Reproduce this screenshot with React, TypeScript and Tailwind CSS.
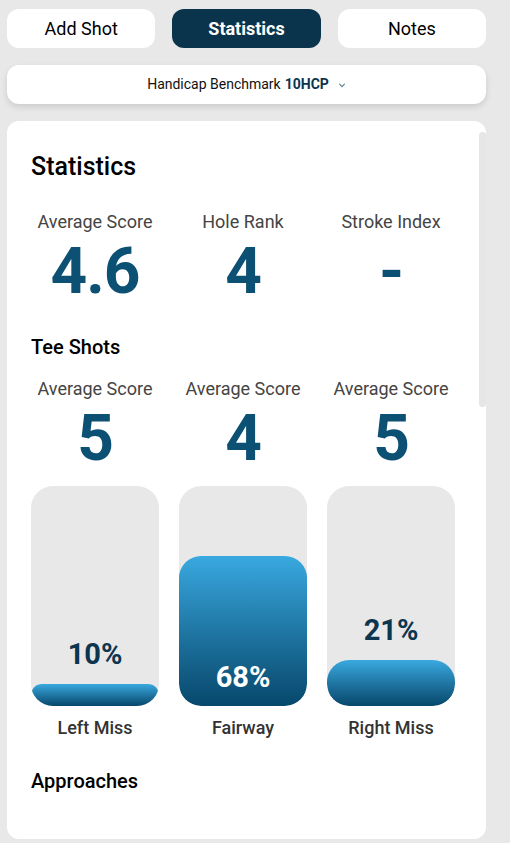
import React from 'react'

const tabs = ['Add Shot', 'Statistics', 'Notes']

interface Miss {
  label: string
  pct: number
  fill: number
}

const misses: Miss[] = [
  { label: 'Left Miss', pct: 10, fill: 22 },
  { label: 'Fairway', pct: 68, fill: 150 },
  { label: 'Right Miss', pct: 21, fill: 46 },
]

function StatCol({ label, value }: { label: string; value: string }) {
  return (
    <div className="flex flex-col items-center">
      <span className="text-[18px] leading-[22px] text-[#444444]">{label}</span>
      <span className="mt-[4px] text-[64px] leading-[70px] font-bold tracking-[-1px] text-[#0c5074]">{value}</span>
    </div>
  )
}

function MissBar({ miss }: { miss: Miss }) {
  const inside = miss.fill > 100
  return (
    <div className="flex flex-col items-center">
      <div className="relative h-[220px] w-full rounded-[22px] bg-[#e8e8e8] overflow-hidden flex flex-col justify-end">
        {!inside && (
          <span className="mb-[15px] text-center text-[29px] leading-[30px] font-bold text-[#0c3550]">
            {miss.pct}%
          </span>
        )}
        <div
          className="w-full rounded-[22px] bg-gradient-to-b from-[#39a9e0] to-[#07486c] flex items-end justify-center"
          style={{ height: miss.fill }}
        >
          {inside && (
            <span className="mb-[14px] text-[29px] leading-[30px] font-bold text-white">{miss.pct}%</span>
          )}
        </div>
      </div>
      <span className="mt-[11px] text-[18px] leading-[22px] font-medium text-[#333333]">{miss.label}</span>
    </div>
  )
}

export default function App() {
  return (
    <div className="min-h-[843px] w-[510px] bg-[#e8e8e8] px-[7px] pt-[9px] font-['Roboto',sans-serif]">
      <div className="w-[479px]">
        <div className="grid grid-cols-3 gap-[17px]">
          {tabs.map((t) => (
            <button
              key={t}
              className={
                t === 'Statistics'
                  ? 'h-[39px] rounded-[12px] bg-[#0a344c] text-[18px] font-bold text-white'
                  : 'h-[39px] rounded-[12px] bg-white text-[18px] text-black'
              }
            >
              {t}
            </button>
          ))}
        </div>

        <div className="mt-[17px] h-[39px] rounded-[12px] bg-white shadow-[0_3px_6px_rgba(0,0,0,0.12)] flex items-center justify-center text-[14px] text-[#111111]">
          <span>Handicap Benchmark</span>
          <span className="ml-1 font-bold text-[#0c3550]">10HCP</span>
          <svg className="ml-[9px] h-[8px] w-[8px] text-[#5a7d92]" viewBox="0 0 10 10" fill="none">
            <path d="M2 4l3 3 3-3" stroke="currentColor" strokeWidth="1.4" strokeLinecap="round" />
          </svg>
        </div>

        <div className="relative mt-[17px] rounded-[12px] bg-white pl-[24px] pr-[31px] pt-[31px] pb-[46px]">
          <div className="absolute right-0 top-[11px] h-[275px] w-[7px] rounded-full bg-[#e6e6e6]" />
          <h2 className="text-[25px] leading-[30px] font-medium text-black">Statistics</h2>

          <div className="mt-[29px] grid grid-cols-3 gap-[20px]">
            <StatCol label="Average Score" value="4.6" />
            <StatCol label="Hole Rank" value="4" />
            <StatCol label="Stroke Index" value="-" />
          </div>

          <h3 className="mt-[28px] text-[20px] leading-[24px] font-medium text-black">Tee Shots</h3>

          <div className="mt-[19px] grid grid-cols-3 gap-[20px]">
            <StatCol label="Average Score" value="5" />
            <StatCol label="Average Score" value="4" />
            <StatCol label="Average Score" value="5" />
          </div>

          <div className="mt-[12px] grid grid-cols-3 gap-[20px]">
            {misses.map((m) => (
              <MissBar key={m.label} miss={m} />
            ))}
          </div>

          <h3 className="mt-[30px] text-[20px] leading-[24px] font-medium text-black">Approaches</h3>
        </div>
      </div>
    </div>
  )
}
